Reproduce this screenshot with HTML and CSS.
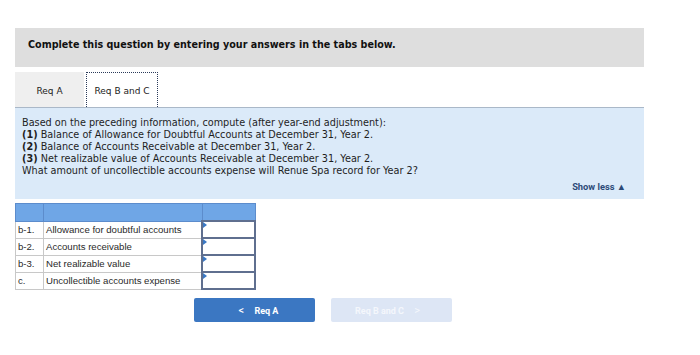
FILE: index.html
```html
<!DOCTYPE html>
<html>
<head>
    <link rel="stylesheet" href="styles.css">
</head>
<body>
    <div class="page">
        <div class="header">Complete this question by entering your answers in the tabs below.</div>

        <div class="tabs">
            <div class="tab">Req A</div>
            <div class="tab active">Req B and C</div>
        </div>

        <div class="panel">
            <p>
                Based on the preceding information, compute (after year-end adjustment):<br />
                <b>(1)</b> Balance of Allowance for Doubtful Accounts at December 31, Year 2.<br />
                <b>(2)</b> Balance of Accounts Receivable at December 31, Year 2.<br />
                <b>(3)</b> Net realizable value of Accounts Receivable at December 31, Year 2.<br />
                What amount of uncollectible accounts expense will Renue Spa record for Year 2?
            </p>
            <div class="show-less">Show less &#9650;</div>
        </div>

        <table class="answers">
            <tr class="head">
                <td class="num"></td>
                <td class="label"></td>
                <td class="val"></td>
            </tr>
            <tr>
                <td class="num">b-1.</td>
                <td class="label">Allowance for doubtful accounts</td>
                <td class="val"><span class="mark"></span></td>
            </tr>
            <tr>
                <td class="num">b-2.</td>
                <td class="label">Accounts receivable</td>
                <td class="val"><span class="mark"></span></td>
            </tr>
            <tr>
                <td class="num">b-3.</td>
                <td class="label">Net realizable value</td>
                <td class="val"><span class="mark"></span></td>
            </tr>
            <tr>
                <td class="num">c.</td>
                <td class="label">Uncollectible accounts expense</td>
                <td class="val"><span class="mark"></span></td>
            </tr>
        </table>

        <div class="nav">
            <button class="btn prev"><span class="chev">&lt;</span> Req A</button>
            <button class="btn next">Req B and C <span class="chev">&gt;</span></button>
        </div>
    </div>
</body>
</html>
```

FILE: styles.css
```css
body {
    margin: 0;
    background: #ffffff;
    font-family: "DejaVu Sans", Verdana, sans-serif;
    color: #222;
}

.page {
    width: 629px;
    padding: 28px 0 0 15px;
}

.header {
    background: #dedede;
    height: 39px;
    line-height: 34px;
    padding-left: 13px;
    font-size: 9.6px;
    font-weight: bold;
    color: #111;
}

.tabs {
    display: flex;
    margin-top: 5px;
    gap: 1px;
}

.tab {
    width: 69px;
    height: 35px;
    line-height: 38px;
    text-align: center;
    font-size: 9px;
    background: #efefef;
    box-sizing: border-box;
}

.tab.active {
    width: 72px;
    background: #ffffff;
    border: 1px dotted #2a3a5a;
    border-bottom: none;
    line-height: 36px;
    margin-left: 1px;
}

.panel {
    background: #dbeaf9;
    border-top: 1px solid #aab8c8;
    height: 91px;
    padding: 0 0 0 7px;
    position: relative;
}

.panel p {
    margin: 0;
    padding-top: 9px;
    font-size: 9.7px;
    line-height: 12px;
    color: #1e1e1e;
}

.show-less {
    position: absolute;
    right: 18px;
    bottom: 7px;
    font-family: Roboto, "Liberation Sans", sans-serif;
    font-size: 9.3px;
    font-weight: bold;
    color: #2c4a78;
}

.answers {
    margin-top: 4px;
    border-collapse: collapse;
    font-family: "Liberation Sans", Arial, sans-serif;
    font-size: 9.6px;
    color: #2a2a2a;
}

.answers td {
    height: 15px;
    padding: 0 0 0 2px;
    border: 1px solid #c8c8c8;
}

.answers .head td {
    height: 16px;
    background: #6fa6e6;
    border-color: #5c8ccc;
}

.answers .num {
    width: 25px;
}

.answers .label {
    width: 155px;
}

.answers .val {
    width: 51px;
    border: 2px solid #5f6f8f;
    position: relative;
    padding: 0;
}

.answers .head .val {
    border: 1px solid #5c8ccc;
}

.mark {
    position: absolute;
    top: 0;
    left: 0;
    width: 0;
    height: 0;
    border-top: 3px solid transparent;
    border-bottom: 3px solid transparent;
    border-left: 4px solid #3a78c4;
}

.nav {
    display: flex;
    gap: 16px;
    margin: 8px 0 0 179px;
}

.btn {
    width: 121px;
    height: 24px;
    border: none;
    border-radius: 2px;
    font-family: Roboto, "Liberation Sans", sans-serif;
    font-size: 9px;
    font-weight: bold;
}

.btn.prev {
    background: #3b77c2;
    color: #ffffff;
}

.btn.next {
    background: #dde6f5;
    color: #f4f7fc;
}

.chev {
    font-size: 11px;
    font-weight: normal;
    margin: 0 8px;
}
```
